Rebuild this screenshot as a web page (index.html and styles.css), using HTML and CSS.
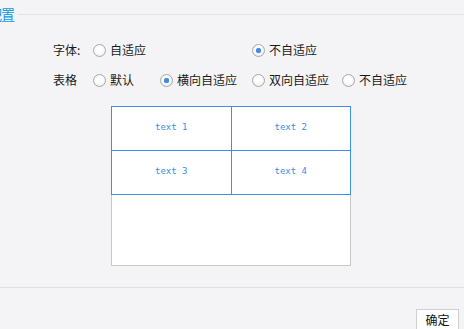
FILE: index.html
```html
<!DOCTYPE html>
<html lang="zh">
<head>
<meta charset="utf-8">
<link rel="stylesheet" href="styles.css">
</head>
<body>
<div class="legend-row">
  <span class="legend">配置</span>
  <span class="legend-line"></span>
</div>
<div class="form">
  <span class="label">字体:</span>
  <label class="opt span2"><span class="radio"></span>自适应</label>
  <label class="opt span2"><span class="radio checked"></span>不自适应</label>
  <span class="label">表格</span>
  <label class="opt"><span class="radio"></span>默认</label>
  <label class="opt"><span class="radio checked"></span>横向自适应</label>
  <label class="opt"><span class="radio"></span>双向自适应</label>
  <label class="opt"><span class="radio"></span>不自适应</label>
</div>
<div class="preview">
  <table class="grid">
    <tr><td>text 1</td><td>text 2</td></tr>
    <tr><td>text 3</td><td>text 4</td></tr>
  </table>
</div>
<div class="divider"></div>
<div class="footer">
  <button class="btn">确定</button>
</div>
</body>
</html>
```
FILE: styles.css
```css
html, body {
  margin: 0;
  padding: 0;
  background: #f4f4f7;
  font-family: "Noto Sans CJK SC", "Liberation Sans", sans-serif;
  font-size: 12px;
  color: #1a1a1a;
  overflow: hidden;
}
.legend-row {
  display: flex;
  align-items: center;
  height: 28px;
  margin-left: -12px;
}
.legend {
  color: #119be0;
  font-size: 14px;
  line-height: 16px;
  letter-spacing: -1px;
}
.legend-line {
  flex: 1;
  height: 1px;
  background: #e2e2e7;
  margin-left: 4px;
}
.form {
  display: grid;
  grid-template-columns: 40px 67px 92px 90px auto;
  grid-auto-rows: 30px;
  align-items: center;
  margin-top: 7px;
  padding-left: 53px;
}
.label {
  line-height: 16px;
}
.opt {
  display: flex;
  align-items: center;
  gap: 4px;
  white-space: nowrap;
  line-height: 16px;
}
.span2 {
  grid-column: span 2;
}
.radio {
  box-sizing: border-box;
  width: 13px;
  height: 13px;
  border-radius: 50%;
  border: 1px solid #a9a9a9;
  background: radial-gradient(circle at 50% 40%, #ffffff 35%, #e4e4e4 100%);
  position: relative;
  flex: none;
}
.radio.checked::after {
  content: "";
  position: absolute;
  left: 3px;
  top: 3px;
  width: 5px;
  height: 5px;
  border-radius: 50%;
  background: #3d8ae8;
  box-shadow: 0 0 1px #7fb2f0;
}
.preview {
  box-sizing: border-box;
  width: 240px;
  height: 160px;
  margin: 11px 0 0 111px;
  border: 1px solid #c8c8c8;
  background: #fff;
}
.grid {
  border-collapse: collapse;
  margin: -1px -1px 0 -1px;
  width: 240px;
}
.grid td {
  border: 1px solid #3d8ef0;
  height: 40px;
  padding: 0 0 3px 0;
  text-align: center;
  font-family: "DejaVu Sans Mono", "Liberation Mono", monospace;
  font-size: 9px;
  line-height: 12px;
  color: #3a8ee6;
  width: 50%;
}
.divider {
  height: 1px;
  background: #e0e0e4;
  margin-top: 21px;
}
.footer {
  display: flex;
  justify-content: flex-end;
  padding: 21px 5px 0 0;
}
.btn {
  box-sizing: border-box;
  width: 43px;
  height: 22px;
  border: 1px solid #cfcfcf;
  background: #fff;
  font-family: "Noto Sans CJK SC", sans-serif;
  font-size: 12px;
  color: #111;
  padding: 0;
  line-height: 18px;
}
```
